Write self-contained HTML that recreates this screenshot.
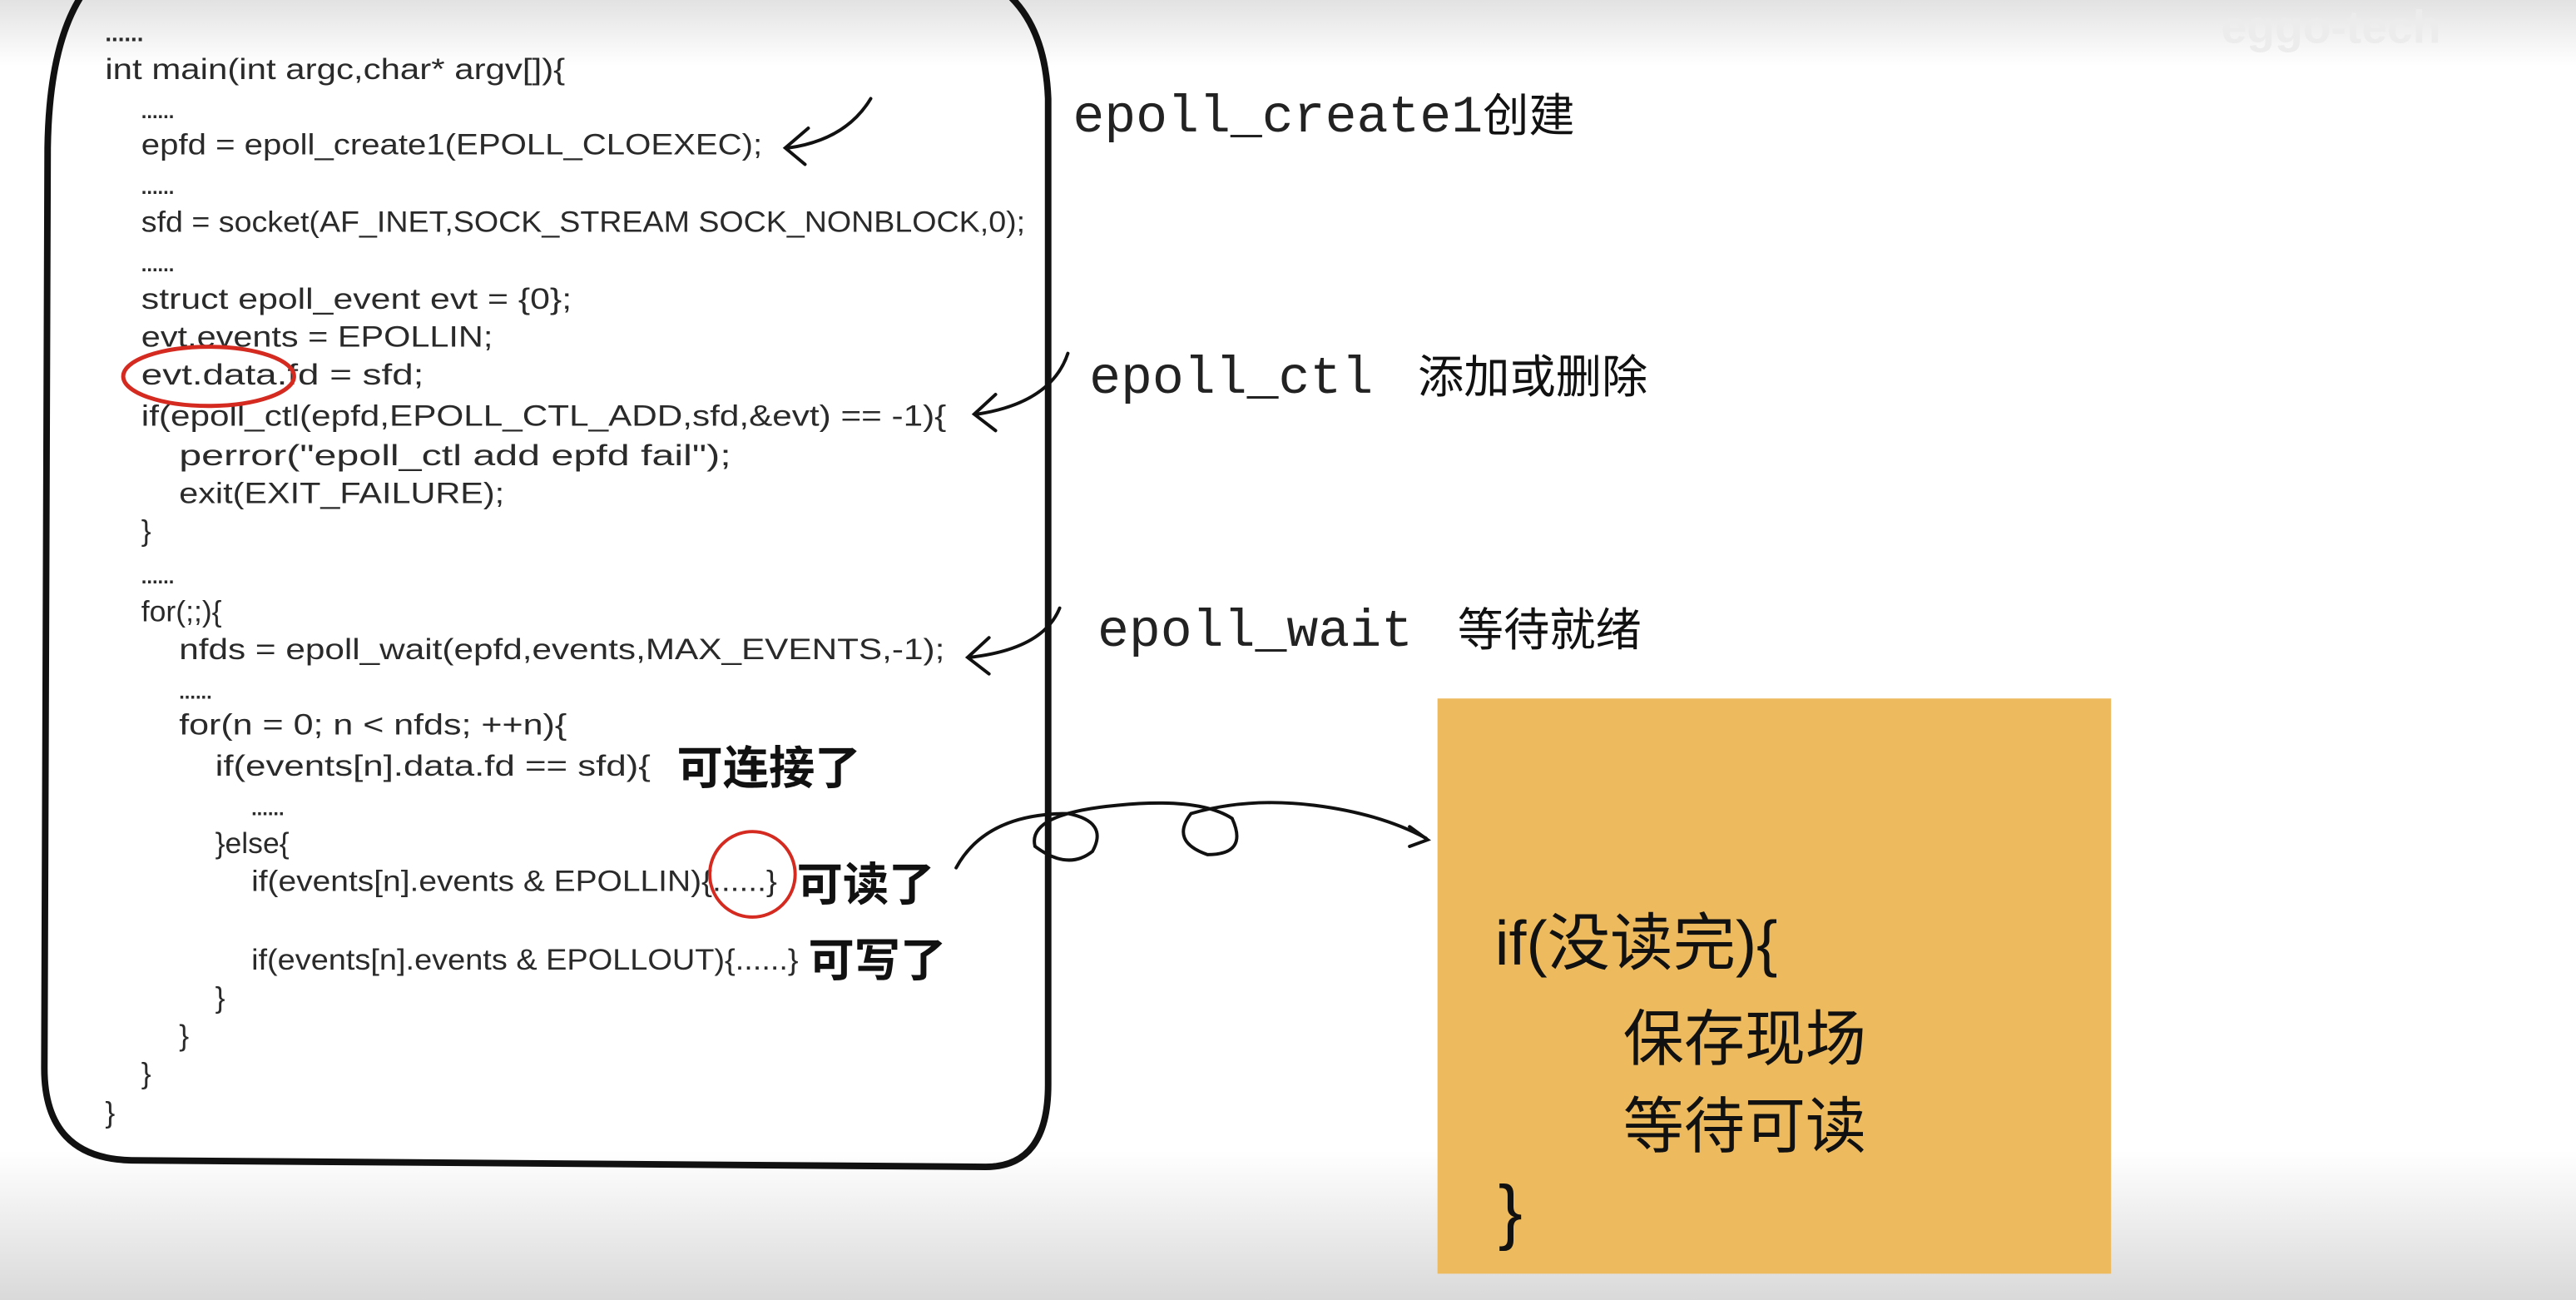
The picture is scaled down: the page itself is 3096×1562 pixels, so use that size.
<!DOCTYPE html>
<html><head><meta charset="utf-8"><style>
html,body{margin:0;padding:0;width:3096px;height:1562px;overflow:hidden;background:#fff}
svg{display:block}
.c{font-family:"Liberation Sans","Noto Sans CJK SC",sans-serif;font-size:18px;fill:#2a2a2a}
.m{font-family:"Liberation Mono","Noto Sans CJK SC",monospace;font-size:32px;fill:#222}
.z{font-family:"Liberation Sans","Noto Sans CJK SC",sans-serif;font-size:28px;fill:#111;font-weight:bold}
.h{font-family:"Liberation Sans","Noto Sans CJK SC",sans-serif;font-size:28px;fill:#111}
</style></head><body>
<svg width="3096" height="1562" viewBox="0 0 1568 791" preserveAspectRatio="none">
<defs>
<linearGradient id="tg" x1="0" y1="0" x2="0" y2="1"><stop offset="0" stop-color="#e2e2e2"/><stop offset="1" stop-color="#fff"/></linearGradient>
<linearGradient id="bg" x1="0" y1="0" x2="0" y2="1"><stop offset="0" stop-color="#fff"/><stop offset="1" stop-color="#d9d9d9"/></linearGradient>
</defs>
<rect x="0" y="0" width="1568" height="40" fill="url(#tg)"/>
<rect x="0" y="700" width="1568" height="91" fill="url(#bg)"/>
<text x="1352" y="26" font-family="Liberation Sans,sans-serif" font-size="28" fill="#ececec" font-weight="bold">eggo-tech</text>
<path d="M55 -10 Q30 20 29 90 L27 650 Q27 705 80 706 L600 710 Q638 710 638 660 L638 60 Q636 10 605 -10" fill="none" stroke="#111" stroke-width="4"/>
<g class="c" lengthAdjust="spacingAndGlyphs">
<text x="64" y="25" font-weight="bold" font-size="14">......</text>
<text x="64" y="48" textLength="280" lengthAdjust="spacingAndGlyphs">int main(int argc,char* argv[]){</text>
<text x="86" y="72" font-weight="bold" font-size="12">......</text>
<text x="86" y="94" textLength="378" lengthAdjust="spacingAndGlyphs">epfd = epoll_create1(EPOLL_CLOEXEC);</text>
<text x="86" y="118" font-weight="bold" font-size="12">......</text>
<text x="86" y="141" textLength="538" lengthAdjust="spacingAndGlyphs">sfd = socket(AF_INET,SOCK_STREAM SOCK_NONBLOCK,0);</text>
<text x="86" y="165" font-weight="bold" font-size="12">......</text>
<text x="86" y="188" textLength="262" lengthAdjust="spacingAndGlyphs">struct epoll_event evt = {0};</text>
<text x="86" y="211" textLength="214" lengthAdjust="spacingAndGlyphs">evt.events = EPOLLIN;</text>
<text x="86" y="234" textLength="172" lengthAdjust="spacingAndGlyphs">evt.data.fd = sfd;</text>
<text x="86" y="259" textLength="490" lengthAdjust="spacingAndGlyphs">if(epoll_ctl(epfd,EPOLL_CTL_ADD,sfd,&amp;evt) == -1){</text>
<text x="109" y="283" textLength="336" lengthAdjust="spacingAndGlyphs">perror("epoll_ctl add epfd fail");</text>
<text x="109" y="306" textLength="198" lengthAdjust="spacingAndGlyphs">exit(EXIT_FAILURE);</text>
<text x="86" y="329">}</text>
<text x="86" y="355" font-weight="bold" font-size="12">......</text>
<text x="86" y="378">for(;;){</text>
<text x="109" y="401" textLength="466" lengthAdjust="spacingAndGlyphs">nfds = epoll_wait(epfd,events,MAX_EVENTS,-1);</text>
<text x="109" y="425" font-weight="bold" font-size="12">......</text>
<text x="109" y="447" textLength="236" lengthAdjust="spacingAndGlyphs">for(n = 0; n &lt; nfds; ++n){</text>
<text x="131" y="472" textLength="265" lengthAdjust="spacingAndGlyphs">if(events[n].data.fd == sfd){</text>
<text x="153" y="496" font-weight="bold" font-size="12">......</text>
<text x="131" y="519">}else{</text>
<text x="153" y="542" textLength="320" lengthAdjust="spacingAndGlyphs">if(events[n].events &amp; EPOLLIN){......}</text>
<text x="153" y="590" textLength="333" lengthAdjust="spacingAndGlyphs">if(events[n].events &amp; EPOLLOUT){......}</text>
<text x="131" y="613">}</text>
<text x="109" y="636">}</text>
<text x="86" y="659">}</text>
<text x="64" y="683">}</text>
</g>
<ellipse cx="127" cy="229" rx="52" ry="18" fill="none" stroke="#d42a20" stroke-width="2.5"/>
<circle cx="458" cy="532" r="26" fill="none" stroke="#d42a20" stroke-width="2"/>
<g fill="none" stroke="#111" stroke-width="2" stroke-linecap="round">
<path d="M530 60 Q515 85 480 90"/><path d="M492 78 L478 90 L490 100"/>
<path d="M650 215 Q640 245 595 252"/><path d="M606 240 L593 252 L606 262"/>
<path d="M645 370 Q635 395 590 400"/><path d="M602 388 L589 400 L602 410"/>
<path d="M582 528 Q600 495 650 495 Q675 500 665 518 Q650 530 630 515 Q625 495 680 490 Q730 485 750 498 Q760 520 735 520 Q712 512 725 495 Q760 485 800 490 Q840 495 868 510"/>
<path d="M858 503 L869 511 L858 515"/>
</g>
<text class="m" x="653" y="80">epoll_create1<tspan class="h" font-size="28">创建</tspan></text>
<text class="m" x="663" y="239">epoll_ctl <tspan class="h" font-size="26" dx="8">添加或删除</tspan></text>
<text class="m" x="668" y="393">epoll_wait <tspan class="h" font-size="26" dx="8">等待就绪</tspan></text>
<text class="z" x="412" y="477">可连接了</text>
<text class="z" x="485" y="548">可读了</text>
<text class="z" x="492" y="594">可写了</text>
<rect x="875" y="425" width="410" height="350" fill="#edbb5e"/>
<g class="h">
<text x="910" y="587" font-size="38" textLength="172" lengthAdjust="spacingAndGlyphs">if(没读完){</text>
<text x="988" y="645" font-size="37">保存现场</text>
<text x="988" y="698" font-size="37">等待可读</text>
<text x="912" y="752" font-size="44">}</text>
</g>
</svg>
</body></html>
